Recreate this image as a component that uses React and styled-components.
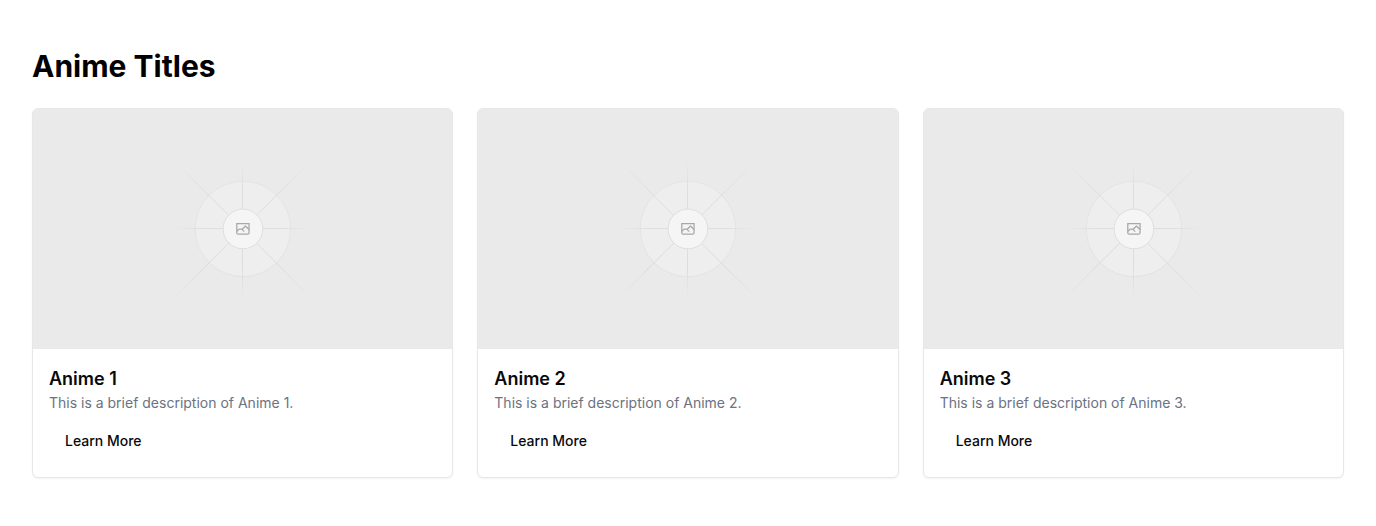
import React from "react";
import styled, { createGlobalStyle } from "styled-components";

const GlobalStyle = createGlobalStyle`
  *, *::before, *::after {
    box-sizing: border-box;
  }

  body {
    margin: 0;
    background: #ffffff;
    color: #09090b;
    font-family: Inter, "Liberation Sans", sans-serif;
  }
`;

const Section = styled.main`
  padding: 48px 32px;
`;

const Heading = styled.h1`
  margin: 0 0 24px;
  color: #000000;
  font-size: 30px;
  line-height: 36px;
  font-weight: 700;
`;

const CardGrid = styled.div`
  display: grid;
  grid-template-columns: repeat(3, minmax(0, 1fr));
  gap: 24px;

  @media (max-width: 900px) {
    grid-template-columns: minmax(0, 1fr);
  }
`;

const Card = styled.article`
  overflow: hidden;
  border: 1px solid #e5e7eb;
  border-radius: 6px;
  background: #ffffff;
  box-shadow: 0 1px 2px rgba(0, 0, 0, 0.05);
`;

const Artwork = styled.svg`
  display: block;
  width: 100%;
  height: 240px;
  background: #eaeaea;
`;

const CardBody = styled.div`
  padding: 16px;
`;

const CardTitle = styled.h2`
  margin: 0;
  font-size: 18px;
  line-height: 28px;
  font-weight: 600;
`;

const Description = styled.p`
  margin: 0 0 8px;
  color: #6b7280;
  font-size: 14px;
  line-height: 20px;
`;

const LearnMoreButton = styled.button`
  height: 40px;
  padding: 0 16px;
  border: 0;
  border-radius: 6px;
  background: transparent;
  color: #09090b;
  font: inherit;
  font-size: 14px;
  line-height: 20px;
  font-weight: 500;
  cursor: pointer;

  &:hover {
    background: #f4f4f5;
  }
`;

const fadingLines = [
  [403, 797.6, 797, 403.6],
  [404.8, 598.7, 796.6, 598.7],
  [599.5, 795.7, 599.5, 404],
  [797, 797.8, 403, 403.8],
];

function Placeholder({ id, label }) {
  return (
    <Artwork
      viewBox="0 0 1200 1200"
      preserveAspectRatio="xMidYMid slice"
      fill="none"
      role="img"
      aria-label={label}
    >
      <defs>
        {fadingLines.map(([x1, y1, x2, y2], i) => (
          <linearGradient
            key={i}
            id={`${id}-fade-${i}`}
            gradientUnits="userSpaceOnUse"
            x1={x1}
            y1={y1}
            x2={x2}
            y2={y2}
          >
            <stop stopColor="#c9c9c9" stopOpacity="0" />
            <stop offset="0.208" stopColor="#c9c9c9" />
            <stop offset="0.792" stopColor="#c9c9c9" />
            <stop offset="1" stopColor="#c9c9c9" stopOpacity="0" />
          </linearGradient>
        ))}
      </defs>
      <rect width="1200" height="1200" fill="#eaeaea" />
      <g opacity="0.5">
        <g opacity="0.5">
          <circle cx="600.7" cy="599.9" r="136.6" fill="#fafafa" />
          <circle cx="600.7" cy="599.9" r="136.6" stroke="#c9c9c9" strokeWidth="2.4" />
        </g>
        {fadingLines.map(([x1, y1, x2, y2], i) => (
          <path
            key={i}
            d={`M${x1} ${y1}L${x2} ${y2}`}
            stroke={`url(#${id}-fade-${i})`}
            strokeWidth="2.4"
          />
        ))}
        <circle cx="600.7" cy="599.9" r="56.8" fill="#ffffff" />
        <path
          fill="#666666"
          fillRule="evenodd"
          clipRule="evenodd"
          d="M616.426 586.58h-31.434v16.176l3.553-3.554.531-.531h9.068l.074-.074 8.463-8.463h2.565l7.18 7.181V586.58Zm-15.715 14.654 3.698 3.699 1.283 1.282-2.565 2.565-1.282-1.283-5.2-5.199h-6.066l-5.514 5.514-.073.073v2.876a2.418 2.418 0 0 0 2.418 2.418h26.598a2.418 2.418 0 0 0 2.418-2.418v-8.317l-8.463-8.463-7.181 7.181-.071.072Zm-19.347 5.442v4.085a6.045 6.045 0 0 0 6.046 6.045h26.598a6.044 6.044 0 0 0 6.045-6.045v-7.108l1.356-1.355-1.282-1.283-.074-.073v-17.989h-38.689v23.43l-.146.146.146.147Z"
        />
        <circle cx="600.7" cy="599.9" r="56.8" stroke="#c9c9c9" strokeWidth="2.4" />
      </g>
    </Artwork>
  );
}

const titles = [
  { id: "anime-1", name: "Anime 1" },
  { id: "anime-2", name: "Anime 2" },
  { id: "anime-3", name: "Anime 3" },
];

export default function App() {
  return (
    <>
      <GlobalStyle />
      <Section>
        <Heading>Anime Titles</Heading>
        <CardGrid>
          {titles.map(({ id, name }) => (
            <Card key={id}>
              <Placeholder id={id} label={name} />
              <CardBody>
                <CardTitle>{name}</CardTitle>
                <Description>{`This is a brief description of ${name}.`}</Description>
                <LearnMoreButton type="button">Learn More</LearnMoreButton>
              </CardBody>
            </Card>
          ))}
        </CardGrid>
      </Section>
    </>
  );
}
